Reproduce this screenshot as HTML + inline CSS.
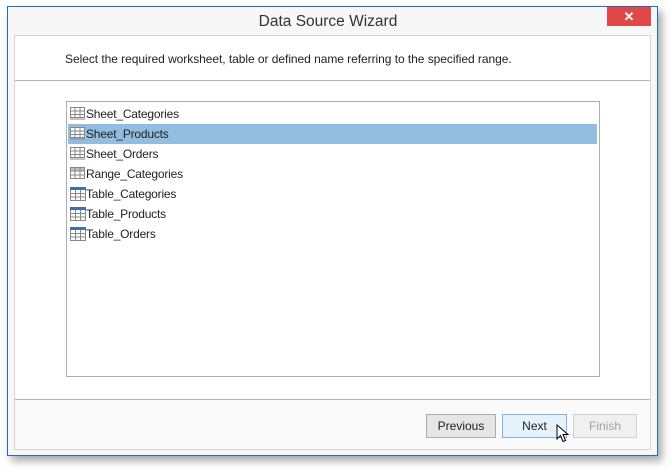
<!DOCTYPE html>
<html><head><style>
body{margin:0;width:670px;height:470px;background:#fff;position:relative;overflow:hidden;font-family:"Segoe UI","Liberation Sans",sans-serif;}
.win{position:absolute;left:7px;top:6px;width:649px;height:448px;border:1px solid #1e6fc4;background:#f7f7f7;box-shadow:4px 5px 8px rgba(0,0,0,.35);}
.title{position:absolute;left:0;right:0;top:6px;text-align:center;font-size:15.5px;color:#333;padding-right:9px;}
.close{position:absolute;left:599px;top:0;width:44px;height:19px;background:#e04848;color:#fff;font-size:13px;font-weight:bold;text-align:center;line-height:19px;}
.panel{position:absolute;left:6px;top:28px;width:635px;height:413px;border:1px solid #d4d4d4;background:#fff;}
.hdr{position:absolute;left:0;right:0;top:0;height:44px;border-bottom:1px solid #b4b4b4;}
.hdr span{position:absolute;left:50px;top:16px;font-size:12px;color:#222;letter-spacing:-0.05px;}
.list{position:absolute;left:51px;top:65px;width:532px;height:274px;border:1px solid #adadad;}
.it{position:absolute;left:1px;height:20px;width:529px;font-size:12px;line-height:20px;color:#222;letter-spacing:-0.2px;}
.it.sel{background:#92bde1;}
.it svg{position:absolute;left:2px;top:3px;}
.it span{position:absolute;left:18px;}
.foot{position:absolute;left:0;right:0;top:363px;bottom:0;border-top:1px solid #b4b4b4;background:#fafafa;}
.btn{position:absolute;top:14px;height:22px;border:1px solid #acacac;background:#e6e6e6;font-size:12px;text-align:center;line-height:22px;color:#222;}
</style></head><body>
<div class="win">
<div class="title">Data Source Wizard</div>
<div class="close">✕</div>
<div class="panel">
<div class="hdr"><span>Select the required worksheet, table or defined name referring to the specified range.</span></div>
<div class="list">
<div class="it" style="top:2px"><svg width="15" height="13"><rect x=".5" y=".5" width="14" height="10" fill="#fff" stroke="#888"/><path d="M5 1v10M10 1v10M1 4h14M1 7.5h14M0 12h15" stroke="#888" fill="none"/></svg><span>Sheet_Categories</span></div>
<div class="it sel" style="top:22px"><svg width="15" height="13"><rect x=".5" y=".5" width="14" height="10" fill="#fff" stroke="#888"/><path d="M5 1v10M10 1v10M1 4h14M1 7.5h14M0 12h15" stroke="#888" fill="none"/></svg><span>Sheet_Products</span></div>
<div class="it" style="top:42px"><svg width="15" height="13"><rect x=".5" y=".5" width="14" height="10" fill="#fff" stroke="#888"/><path d="M5 1v10M10 1v10M1 4h14M1 7.5h14M0 12h15" stroke="#888" fill="none"/></svg><span>Sheet_Orders</span></div>
<div class="it" style="top:62px"><svg width="15" height="13"><rect x=".5" y=".5" width="14" height="11" fill="#fff" stroke="#888"/><rect x="1" y="1" width="13" height="3" fill="#aac4de"/><path d="M5 1v11M10 1v11M1 4h14M1 8h14" stroke="#888" fill="none"/></svg><span>Range_Categories</span></div>
<div class="it" style="top:82px"><svg width="16" height="14"><rect x=".5" y=".5" width="15" height="13" fill="#fff" stroke="#888"/><rect x="0" y="0" width="16" height="3" fill="#3f6fa8"/><path d="M5.5 3v11M10.5 3v11M1 6.5h15M1 10h15" stroke="#888" fill="none"/></svg><span>Table_Categories</span></div>
<div class="it" style="top:102px"><svg width="16" height="14"><rect x=".5" y=".5" width="15" height="13" fill="#fff" stroke="#888"/><rect x="0" y="0" width="16" height="3" fill="#3f6fa8"/><path d="M5.5 3v11M10.5 3v11M1 6.5h15M1 10h15" stroke="#888" fill="none"/></svg><span>Table_Products</span></div>
<div class="it" style="top:122px"><svg width="16" height="14"><rect x=".5" y=".5" width="15" height="13" fill="#fff" stroke="#888"/><rect x="0" y="0" width="16" height="3" fill="#3f6fa8"/><path d="M5.5 3v11M10.5 3v11M1 6.5h15M1 10h15" stroke="#888" fill="none"/></svg><span>Table_Orders</span></div>
</div>
<div class="foot">
<div class="btn" style="left:411px;width:68px">Previous</div>
<div class="btn" style="left:487px;width:63px;border-color:#7eb4ea;background:#e5f1fb">Next</div>
<div class="btn" style="left:558px;width:62px;border-color:#d0d0d0;background:#f0f0f0;color:#a0a0a0">Finish</div>
</div>
</div>
</div>
<svg style="position:absolute;left:556px;top:424px" width="14" height="20"><path d="M1 1v14l3.5-3.5 2.5 6 2.5-1-2.5-6h5z" fill="#fff" stroke="#000" stroke-width="1"/></svg>
</body></html>
